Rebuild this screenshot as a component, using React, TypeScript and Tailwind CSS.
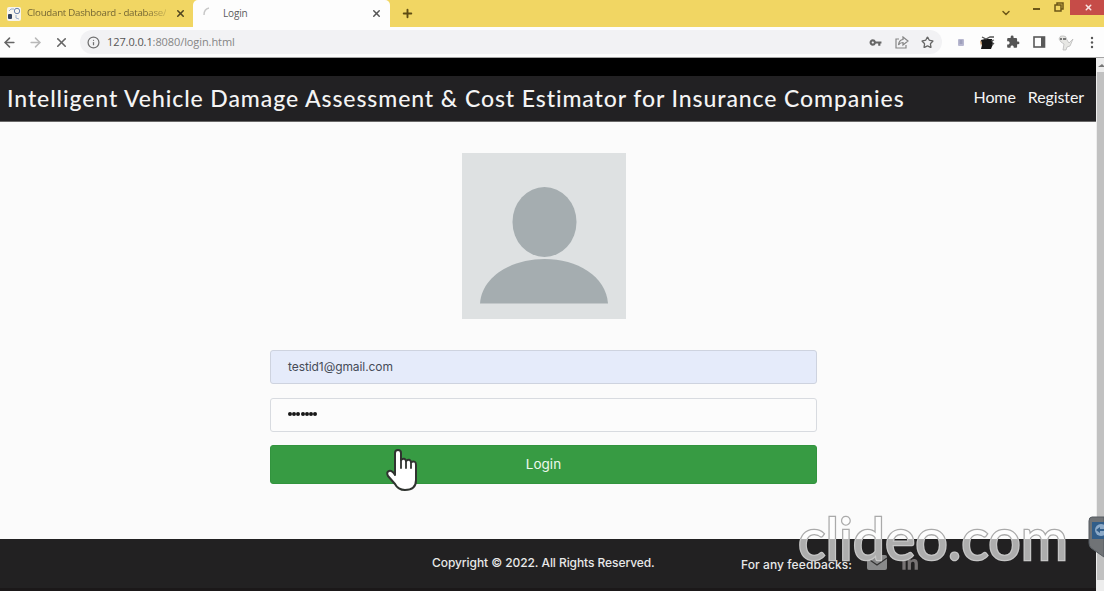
import React from "react";
import { ArrowLeft, ArrowRight, X, Plus, Info, ChevronDown, Star } from "lucide-react";
import { MdVpnKey, MdExtension } from "react-icons/md";
import { FaLinkedinIn } from "react-icons/fa";

function TabStrip() {
  return (
    <div className="flex h-[27px] shrink-0 bg-[#f1d663] font-['Open_Sans',sans-serif] text-[10px]">
      <div className="flex w-[193px] shrink-0 items-center pl-[7px] pr-[7px]">
        <svg width="14" height="14" viewBox="0 0 14 14" className="shrink-0">
          <rect width="14" height="14" rx="2" fill="#f7f5ee" />
          <circle cx="10" cy="4" r="2.7" fill="none" stroke="#6b83ad" strokeWidth="1" />
          <path d="M7 2H4L2 4M9 8v3l3 1" fill="none" stroke="#9eb0cc" />
          <rect x="1" y="7" width="4" height="5" rx="1" fill="#33435f" />
        </svg>
        <div className="ml-[6px] whitespace-nowrap bg-gradient-to-r from-[#6d6031] from-85% to-[#c9b353] bg-clip-text text-[9.7px] tracking-[-0.25px] text-transparent">
          Cloudant Dashboard - database/
        </div>
        <X className="ml-auto shrink-0 text-[#514620]" size={11} strokeWidth={3.4} />
      </div>
      <div className="flex w-[197px] shrink-0 items-center rounded-t-[5px] bg-[#fdfdfd] pl-[10px] pr-[8px] text-[#5c5c5c]">
        <svg width="12" height="14" viewBox="0 0 12 14">
          <path d="M1 8Q1 2 6 1" fill="none" stroke="#c8c8c8" strokeWidth="1.5" />
        </svg>
        <span className="ml-[8px] tracking-[-0.15px]">Login</span>
        <X className="ml-auto text-[#555]" size={11} strokeWidth={3.2} />
      </div>
      <Plus className="ml-[11px] mt-[7px] text-[#5f4c13]" size={13} strokeWidth={3.5} />
      <div className="ml-auto flex items-start">
        <ChevronDown className="mt-[7px] text-[#6c5718]" size={12} strokeWidth={3} />
        <span className="ml-[21px] mt-[8px] h-[2px] w-[7px] bg-[#6c5718]" />
        <svg className="ml-[14px] mt-[2px]" width="10" height="10" viewBox="0 0 10 10" fill="none" stroke="#6c5718" strokeWidth="1.5">
          <path d="M3 3V1h6v6H7M1 3h6v6H1z" />
        </svg>
        <span className="ml-[6px] flex h-[15px] w-[34px] items-center justify-center bg-[#c64c48] pl-[3px]">
          <X className="text-[#f7e4e2]" size={9} strokeWidth={4} />
        </span>
      </div>
    </div>
  );
}

function Toolbar() {
  return (
    <div className="flex h-[31px] shrink-0 items-center border-b border-[#a5a5a5] bg-[#fdfdfd] text-[#666]">
      <ArrowLeft className="ml-[2px] shrink-0" size={15} strokeWidth={2.5} />
      <ArrowRight className="ml-[11px] shrink-0 text-[#b9b9b9]" size={15} strokeWidth={2.4} />
      <X className="ml-[11px] shrink-0" size={15} strokeWidth={2.5} />
      <div className="ml-[11px] flex h-[24px] w-[862px] shrink-0 items-center rounded-full bg-[#f2f2f4] pl-[7px]">
        <Info size={13} strokeWidth={2.3} className="text-[#707070]" />
        <span className="ml-[7px] font-['Open_Sans',sans-serif] text-[11px] tracking-[-0.09px] text-[#858585]">
          <span className="text-[#555]">127.0.0.1</span>:8080/login.html
        </span>
        <MdVpnKey className="ml-auto" size={13} />
        <svg className="ml-[13px]" width="14" height="13" viewBox="0 0 14 13" fill="none" stroke="#858585" strokeWidth="1.2">
          <path d="M4 3H1v9h10V9M8 1l5 4-5 4V6.500Q5 6.500 3.500 9 4 4 8 3.500z" />
        </svg>
        <Star className="ml-[12px] mr-[8px]" size={13} strokeWidth={2.4} />
      </div>
      <svg className="ml-[16px] shrink-0" width="6" height="7" viewBox="0 0 6 7"><rect width="6" height="7" rx="1" fill="#b8b8d0" /><path d="M1.500 2h3M1.500 4h3" stroke="#8588a9" /></svg>
      <svg className="ml-[16px] shrink-0" width="15" height="15" viewBox="0 0 15 15">
        <path d="M1 5l4-1h7l1 5-2 5H1l1-4z" fill="#151515" />
        <path d="M2 2l4 2 4-2h4M11 6l3-1M12 10l2-2" fill="none" stroke="#555" strokeWidth="1.3" />
        <path d="M0 5l2 3-1 3z" fill="#b9844e" />
      </svg>
      <MdExtension className="ml-[11px] shrink-0 text-[#555]" size={14} />
      <svg className="ml-[13px] shrink-0" width="13" height="12" viewBox="0 0 13 12"><rect x="1" y="1" width="10.5" height="10" fill="none" stroke="#595959" strokeWidth="1.6" /><path d="M8 1h4v10H8z" fill="#595959" /></svg>
      <svg className="ml-[12px] shrink-0" width="17" height="17" viewBox="0 0 17 17">
        <path d="M1 5Q2 1 5 2q3-1 4 4l2 3 4-4-3 7-3 1-1 3H5l1-6-3-2z" fill="#e7e7e4" stroke="#bbb" strokeWidth=".8" />
        <path d="M2 5h2M5 5h3" stroke="#555" strokeWidth="1.5" />
      </svg>
      <svg className="ml-[15px] shrink-0" width="4" height="13" viewBox="0 0 4 13" fill="#555"><circle cx="2" cy="2" r="1.2" /><circle cx="2" cy="6.5" r="1.2" /><circle cx="2" cy="11" r="1.2" /></svg>
    </div>
  );
}

function LoginForm() {
  return (
    <main className="flex h-[417px] shrink-0 flex-col items-center bg-[#fbfbfb] pr-[9px] pt-[31px]">
      <svg className="shrink-0" width="164" height="166" viewBox="0 0 164 166">
        <rect width="164" height="166" fill="#dee1e2" />
        <ellipse cx="82.5" cy="69" rx="32" ry="35" fill="#a5adb0" />
        <path d="M18 150.500C20 123 50 106 82.500 106S144 123 146 150.500Z" fill="#a5adb0" />
      </svg>
      <div className="mt-[31px] flex h-[34px] w-[547px] shrink-0 items-center rounded-[3px] border border-[#ced3df] bg-[#e5ebfa] pl-[17px] font-['Inter',sans-serif] text-[12px] tracking-[-0.08px] text-[#454b57]">testid1@gmail.com</div>
      <div className="mt-[14px] flex h-[34px] w-[547px] shrink-0 items-center gap-[0.2px] rounded-[3px] border border-[#d8dbe0] bg-[#fcfcfc] pb-[2px] pl-[17px]">
        {Array.from({ length: 7 }, (_, i) => <span key={i} className="h-[4px] w-[4px] rounded-full bg-[#171717]" />)}
      </div>
      <button className="mt-[13px] h-[39px] w-[547px] shrink-0 rounded-[3px] border border-[#32943e] bg-[#379b43] font-['Inter',sans-serif] text-[13.5px] text-[#edf8ed]">Login</button>
    </main>
  );
}

export default function App() {
  return (
    <div className="relative flex h-[591px] w-[1104px] flex-col overflow-hidden bg-white">
      <TabStrip />
      <Toolbar />
      <div className="flex h-[533px]">
        <div className="flex w-[1096px] flex-col">
          <div className="h-[18px] shrink-0 bg-black" />
          <header className="flex h-[46px] shrink-0 items-center whitespace-nowrap border-b border-[#696868] bg-[#222123] pb-[3px] pl-[7px] pr-[12px] font-['Lato',sans-serif] text-[#f4f4f4]">
            <h1 className="pt-[2px] text-[23px] font-medium leading-none tracking-[0.91px]">Intelligent Vehicle Damage Assessment &amp; Cost Estimator for Insurance Companies</h1>
            <nav className="ml-auto flex gap-[12px] text-[16px] tracking-[-0.1px]"><span>Home</span><span>Register</span></nav>
          </header>
          <LoginForm />
          <footer className="flex h-[52px] shrink-0 whitespace-nowrap border-b-[3px] border-[#1b1819] bg-[#222122] pl-[432px] pt-[15px] font-['Inter',sans-serif] text-[12px] font-medium text-[#e8e8e8]">
            <span className="w-[309px] tracking-[-0.07px]">Copyright © 2022. All Rights Reserved.</span>
            <span className="mt-[2px] w-[126px] tracking-[0.08px]">For any feedbacks:</span>
            <svg className="mt-px" width="20" height="15" viewBox="0 0 20 15"><rect width="20" height="15" rx="2" fill="#88898a" /><path d="M0 3l10 7 10-7" fill="none" stroke="#333" strokeWidth="1.2" /></svg>
            <FaLinkedinIn className="ml-[14px] text-[#777374]" size={18} />
          </footer>
        </div>
        <div className="flex w-[8px] flex-col items-center bg-[#ededed]">
          <svg className="mt-[5px]" width="8" height="4" viewBox="0 0 8 4"><path d="M2 4l4-3 2 2v1z" fill="#777" /></svg>
          <div className="mt-[5px] h-[508px] w-[7px] self-end bg-[#c1c1c1]" />
        </div>
      </div>

      <svg className="absolute left-[790px] top-[500px]" width="290" height="80" viewBox="0 0 290 80">
        <defs>
          <linearGradient id="wordmark" gradientUnits="userSpaceOnUse" x1="0" y1="0" x2="0" y2="80">
            <stop offset="0.4875" stopColor="#fdfdfd" />
            <stop offset="0.4875" stopColor="#adadad" />
          </linearGradient>
          <linearGradient id="wordmark-edge" gradientUnits="userSpaceOnUse" x1="0" y1="0" x2="0" y2="80">
            <stop offset="0.4875" stopColor="#aaaaaa" />
            <stop offset="0.4875" stopColor="#c6c6c6" />
          </linearGradient>
        </defs>
        <text x="8" y="59.500" textLength="270" lengthAdjust="spacingAndGlyphs" fontFamily="Lato, sans-serif" fontSize="59" fill="url(#wordmark)" stroke="url(#wordmark-edge)" strokeWidth="2.6" paintOrder="stroke">clideo.com</text>
      </svg>
      <svg className="absolute left-[1088px] top-[516px]" width="16" height="44" viewBox="0 0 16 44">
        <path d="M4 1h12v40L3 32Q1 30 1 27V5Q1 1 4 1z" fill="#707376" stroke="#555b61" />
        <rect x="4" y="6" width="14" height="17" fill="#315d89" />
        <circle cx="13" cy="14" r="6" fill="#8daac8" /><path d="M8 14l4-3v2h5v2h-5v2z" fill="#315d89" />
      </svg>
      <svg className="absolute left-[385px] top-[447px]" width="35" height="46" viewBox="0 0 35 46">
        <path d="M10 6Q10 3 13 3T16 6V13Q20 10 21 14Q25 11 26 15Q31 13 31 18V33Q31 43 20 43Q13 43 10 37L3 29Q1 25 4 24Q7 23 10 28Z" fill="#fff" stroke="#303430" strokeWidth="2" strokeLinejoin="round" />
        <path d="M16 12v9M21 14v7M26 15v6" stroke="#303430" strokeWidth="1.800" strokeLinecap="round" />
      </svg>
    </div>
  );
}
